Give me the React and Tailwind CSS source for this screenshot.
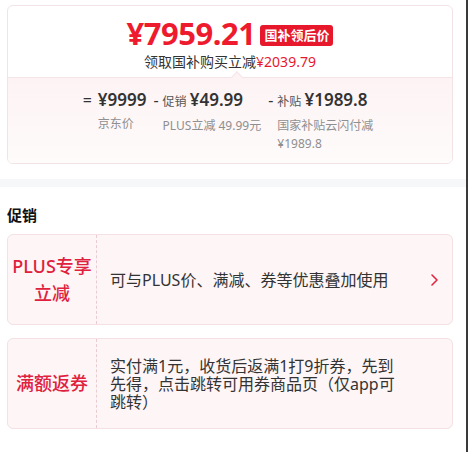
import React from 'react';

const font = { fontFamily: '"Noto Sans", "Noto Sans CJK SC", sans-serif' };

const Breakdown = () => (
  <div className="flex justify-center gap-[7px] pt-[11px] pb-[10px]">
    <div className="flex">
      <span className="mr-[6px] text-[16px] leading-[22px] text-[#333]">=</span>
      <div className="flex flex-col">
        <span className="text-[17px] leading-[22px] font-semibold text-[#333]">¥9999</span>
        <span className="mt-[4px] text-[12px] leading-[18px] text-[#8f8f8f]">京东价</span>
      </div>
    </div>
    <div className="flex">
      <span className="mr-[4px] text-[16px] leading-[22px] text-[#333]">-</span>
      <div className="flex flex-col">
        <span className="leading-[22px]">
          <span className="text-[12px] text-[#555]">促销 </span>
          <span className="text-[17px] font-semibold text-[#333]">¥49.99</span>
        </span>
        <span className="mt-[4px] text-[12px] leading-[18px] text-[#8f8f8f]">PLUS立减 49.99元</span>
      </div>
    </div>
    <div className="flex">
      <span className="mr-[4px] text-[16px] leading-[22px] text-[#333]">-</span>
      <div className="flex flex-col">
        <span className="leading-[22px]">
          <span className="text-[12px] text-[#555]">补贴 </span>
          <span className="text-[17px] font-semibold text-[#333]">¥1989.8</span>
        </span>
        <span className="mt-[4px] max-w-[100px] text-[12px] leading-[18px] text-[#8f8f8f]">
          国家补贴云闪付减 ¥1989.8
        </span>
      </div>
    </div>
  </div>
);

const PromoCard = ({ label, children, arrow }) => (
  <div className="flex min-h-[91px] rounded-[6px] border border-[#f3e1e4] bg-[#fdf5f6]">
    <div className="flex w-[89px] shrink-0 items-center justify-center border-r border-dashed border-[#e9ccd1] text-center">
      <span className="text-[18px] leading-[27px] font-medium text-[#e0213d]">{label}</span>
    </div>
    <div className="flex flex-1 items-center pl-[13px]">
      <div className="flex-1 text-[16px] leading-[18px] text-[#333]">{children}</div>
      <div className="flex w-[50px] justify-end pr-[14px]">
        {arrow && (
          <svg width="7" height="12" viewBox="0 0 7 12" fill="none">
            <polyline points="1,1 6,6 1,11" stroke="#e0213d" strokeWidth="1.5" strokeLinecap="round" strokeLinejoin="round" />
          </svg>
        )}
      </div>
    </div>
  </div>
);

export default function App() {
  return (
    <div className="flex h-[452px] bg-white" style={font}>
      <div className="w-[466px]">
        <div className="px-[7px] pt-[5px]">
          <div className="w-[446px] overflow-hidden rounded-[6px] border border-[#f2e4e6] bg-white">
            <div className="flex flex-col items-center pt-[8px] pb-[5px]">
              <div className="flex items-end">
                <span className="text-[31px] leading-[38px] font-bold tracking-[-0.5px] text-[#ee1b2e]">¥7959.21</span>
                <span className="mb-[6px] ml-[5px] flex h-[21px] items-center rounded-[3px] bg-[#e8182c] px-[4px] text-[13px] font-bold text-white">
                  国补领后价
                </span>
              </div>
              <div className="text-[14px] leading-[20px] text-[#333]">
                领取国补购买立减<span className="text-[#e8182c]">¥2039.79</span>
              </div>
            </div>
            <div className="relative border-t border-[#f6e5e8] bg-gradient-to-b from-[#fdf3f4] to-[#fefbfb]">
              <div className="absolute left-[225px] top-[-5px] h-[8px] w-[8px] rotate-45 border-t border-l border-[#f6e5e8] bg-[#fdf3f4]" />
              <Breakdown />
            </div>
          </div>
        </div>
        <div className="mt-[15px] h-[8px] bg-[#f6f7f9]" />
        <div className="px-[7px]">
          <h2 className="pt-[17px] pb-[8px] text-[15px] leading-[22px] font-bold text-[#111]">促销</h2>
          <div className="flex w-[446px] flex-col gap-[13px]">
            <PromoCard label={<>PLUS专享<br />立减</>} arrow>
              可与PLUS价、满减、券等优惠叠加使用
            </PromoCard>
            <PromoCard label="满额返券">
              实付满1元，收货后返满1打9折券，先到先得，点击跳转可用券商品页（仅app可跳转）
            </PromoCard>
          </div>
        </div>
      </div>
      <div className="w-[2px] bg-[#3a3a3a]" />
    </div>
  );
}
